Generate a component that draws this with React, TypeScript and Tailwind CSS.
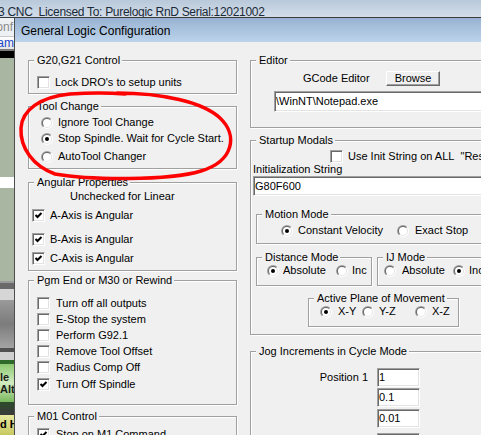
import React from "react";

type P = { className?: string; children?: React.ReactNode };

function Check({ on }: { on?: boolean }) {
  return (
    <span className="block w-[13px] h-[13px] shrink-0 bg-white border border-t-[#a0a0a0] border-l-[#a0a0a0] border-r-white border-b-white shadow-[inset_1px_1px_0_#696969,inset_-1px_-1px_0_#e3e3e3]">
      {on && (
        <svg width="11" height="11" viewBox="0 0 11 11" className="block">
          <path d="M2.5 5 L4.5 7 L8.5 3" fill="none" stroke="#000" strokeWidth="2" />
        </svg>
      )}
    </span>
  );
}

function Radio({ on }: { on?: boolean }) {
  return (
    <svg width="12" height="12" viewBox="0 0 12 12" className="block shrink-0">
      <defs>
        <linearGradient id="rOut" x1="0" y1="0" x2="1" y2="1">
          <stop offset="0.45" stopColor="#a0a0a0" />
          <stop offset="0.55" stopColor="#ffffff" />
        </linearGradient>
        <linearGradient id="rIn" x1="0" y1="0" x2="1" y2="1">
          <stop offset="0.45" stopColor="#696969" />
          <stop offset="0.55" stopColor="#e3e3e3" />
        </linearGradient>
      </defs>
      <circle cx="6" cy="6" r="6" fill="url(#rOut)" />
      <circle cx="6" cy="6" r="5" fill="url(#rIn)" />
      <circle cx="6" cy="6" r="4" fill="#fff" />
      {on && <circle cx="6" cy="6" r="2" fill="#000" />}
    </svg>
  );
}

function Field({ className = "", children }: P) {
  return (
    <div
      className={`flex items-center bg-white pl-[1px] whitespace-nowrap overflow-hidden shrink-0 border border-t-[#a0a0a0] border-l-[#a0a0a0] border-r-white border-b-white shadow-[inset_1px_1px_0_#696969,inset_-1px_-1px_0_#e3e3e3] ${className}`}
    >
      {children}
    </div>
  );
}

function Group({ label, className = "", children }: P & { label: string }) {
  return (
    <div className={`relative shrink-0 border border-[#a0a0a0] shadow-[inset_1px_1px_0_#fff,1px_1px_0_#fff] ${className}`}>
      <span className="absolute -top-[7px] left-[5px] bg-[#f0f0f0] pl-[3px] pr-[2px] leading-[13px] whitespace-nowrap">
        {label}
      </span>
      {children}
    </div>
  );
}

function Row({ className = "", children }: P) {
  return <div className={`flex items-center h-[13px] whitespace-nowrap ${className}`}>{children}</div>;
}

function LeftStrip() {
  return (
    <div className="w-[14px] shrink-0 flex flex-col overflow-hidden text-[12px]">
      <div className="h-[18px] shrink-0 bg-[#eef1f4] flex justify-end pr-[1px] text-[#8a8a8a] leading-[18px] whitespace-nowrap">
        Conf
      </div>
      <div className="h-[1px] shrink-0 bg-[#c8c8c8]" />
      <div className="h-[12px] shrink-0 bg-gradient-to-b from-white to-[#e4e4e4] flex justify-end text-[#1a47c8] leading-[12px] whitespace-nowrap">
        Program
      </div>
      <div className="h-[2px] shrink-0 bg-[#7a7a7a]" />
      <div className="h-[7px] shrink-0 bg-black" />
      <div className="h-[119px] shrink-0 bg-[#a9b6a1]" />
      <div className="h-[11px] shrink-0 bg-white" />
      <div className="h-[93px] shrink-0 bg-[#a9b6a1]" />
      <div className="h-[2px] shrink-0 bg-[#9a9a9a]" />
      <div className="h-[6px] shrink-0 bg-[#6a6a6a]" />
      <div className="h-[11px] shrink-0 bg-[#d6d6d6]" />
      <div className="h-[48px] shrink-0 bg-gradient-to-b from-[#9a9a9a] via-[#7c7c7c] to-[#a4a4a4]" />
      <div className="h-[4px] shrink-0 bg-[#505050]" />
      <div className="h-[8px] shrink-0 bg-[#d0d0d0]" />
      <div className="h-[4px] shrink-0 bg-[#2e6a2a]" />
      <div className="h-[38px] shrink-0 bg-gradient-to-b from-[#8cc870] via-[#d2ecc0] to-[#78b85c] flex flex-col justify-center font-bold text-[11px] leading-[12px] text-[#1a1a1a] whitespace-nowrap">
        <span>le</span>
        <span>Alt</span>
      </div>
      <div className="h-[13px] shrink-0 bg-gradient-to-b from-[#2c4a2a] to-[#3a3a3a]" />
      <div className="h-[20px] shrink-0 bg-gradient-to-b from-[#e8e8a0] to-[#c8c860] font-bold text-[11px] leading-[18px] whitespace-nowrap">
        d H
      </div>
    </div>
  );
}

export default function App() {
  return (
    <div className="relative w-[481px] h-[435px] overflow-hidden bg-[#f0f0f0] font-['Liberation_Sans',Arial,sans-serif] text-[11px] leading-[13px] text-black">
      <div className="h-[18px] border-b border-[#3a3a3a] bg-gradient-to-b from-[#b9c9da] to-[#d2dde8] overflow-hidden">
        <div className="-ml-[2px] pt-[5px] text-[12px] leading-[14px] tracking-[-0.3px] text-[#1b2a3a] whitespace-pre">
          3 CNC  Licensed To: Purelogic RnD Serial:12021002
        </div>
      </div>
      <div className="flex h-[417px]">
        <LeftStrip />
        <div className="w-[1px] shrink-0 bg-[#4d4d4d]" />
        <div className="flex-1 flex flex-col min-w-0">
          <div className="h-[24px] shrink-0 bg-gradient-to-b from-[#98b3d2] to-[#bcd3eb] pl-[6px] pt-[6px] text-[12px] leading-[14px] whitespace-nowrap">
            General Logic Configuration
          </div>
          <div className="flex pt-[18px] pl-[13px] gap-[13px]">
            {/* left column */}
            <div className="w-[209px] shrink-0 flex flex-col">
              <Group label="G20,G21 Control" className="h-[34px]">
                <Row className="mt-[15px] pl-[8px] gap-[5px]">
                  <Check />
                  Lock DRO's to setup units
                </Row>
              </Group>
              <Group label="Tool Change" className="h-[63px] mt-[12px]">
                <Row className="mt-[9px] pl-[12px] gap-[5px]">
                  <Radio />
                  Ignore Tool Change
                </Row>
                <Row className="mt-[3px] pl-[12px] gap-[5px]">
                  <Radio on />
                  Stop Spindle. Wait for Cycle Start.
                </Row>
                <Row className="mt-[5px] pl-[12px] gap-[5px]">
                  <Radio />
                  AutoTool Changer
                </Row>
              </Group>
              <Group label="Angular Properties" className="h-[89px] mt-[13px]">
                <Row className="mt-[7px] pl-[41px]">Unchecked for Linear</Row>
                <Row className="mt-[6px] pl-[3px] gap-[5px]">
                  <Check on />
                  A-Axis is Angular
                </Row>
                <Row className="mt-[11px] pl-[3px] gap-[5px]">
                  <Check on />
                  B-Axis is Angular
                </Row>
                <Row className="mt-[6px] pl-[3px] gap-[5px]">
                  <Check on />
                  C-Axis is Angular
                </Row>
              </Group>
              <Group label="Pgm End or M30 or Rewind" className="h-[125px] mt-[9px]">
                <Row className="mt-[16px] pl-[8px] gap-[6px]">
                  <Check />
                  Turn off all outputs
                </Row>
                <Row className="mt-[3px] pl-[8px] gap-[6px]">
                  <Check />
                  E-Stop the system
                </Row>
                <Row className="mt-[3px] pl-[8px] gap-[6px]">
                  <Check />
                  Perform G92.1
                </Row>
                <Row className="mt-[3px] pl-[8px] gap-[6px]">
                  <Check />
                  Remove Tool Offset
                </Row>
                <Row className="mt-[3px] pl-[8px] gap-[6px]">
                  <Check />
                  Radius Comp Off
                </Row>
                <Row className="mt-[4px] pl-[8px] gap-[6px]">
                  <Check on />
                  Turn Off Spindle
                </Row>
              </Group>
              <Group label="M01 Control" className="h-[40px] mt-[11px]">
                <Row className="mt-[11px] pl-[8px] gap-[6px]">
                  <Check on />
                  Stop on M1 Command
                </Row>
              </Group>
            </div>

            {/* right column */}
            <div className="w-[260px] shrink-0 flex flex-col">
              <Group label="Editor" className="h-[68px]">
                <div className="flex items-center mt-[10px] pl-[52px] h-[15px] whitespace-nowrap">
                  <span className="w-[83px] shrink-0">GCode Editor</span>
                  <div className="w-[54px] h-[15px] shrink-0 flex items-center justify-center border border-t-white border-l-white border-r-[#696969] border-b-[#696969] shadow-[inset_-1px_-1px_0_#a0a0a0] bg-[#f0f0f0]">
                    Browse
                  </div>
                </div>
                <Field className="mt-[5px] ml-[23px] w-[230px] h-[21px]">{"\\WinNT\\Notepad.exe"}</Field>
              </Group>

              <Group label="Startup Modals" className="h-[195px] mt-[12px]">
                <Row className="mt-[9px] pl-[79px] gap-[5px]">
                  <Check />
                  Use Init String on ALL&nbsp;&nbsp;"Resets"
                </Row>
                <Row className="pl-[2px]">Initialization String</Row>
                <Field className="ml-[2px] w-[240px] h-[20px]">G80F600</Field>

                <Group label="Motion Mode" className="ml-[5px] mt-[18px] w-[240px] h-[30px]">
                  <Row className="mt-[9px] pl-[24px]">
                    <Radio on />
                    <span className="ml-[5px] w-[99px]">Constant Velocity</span>
                    <Radio />
                    <span className="ml-[6px]">Exact Stop</span>
                  </Row>
                </Group>

                <div className="flex mt-[13px] ml-[5px] gap-[5px]">
                  <Group label="Distance Mode" className="w-[116px] h-[29px]">
                    <Row className="mt-[6px] pl-[10px]">
                      <Radio on />
                      <span className="ml-[4px] w-[53px]">Absolute</span>
                      <Radio />
                      <span className="ml-[4px]">Inc</span>
                    </Row>
                  </Group>
                  <Group label="IJ Mode" className="w-[130px] h-[29px]">
                    <Row className="mt-[6px] pl-[6px]">
                      <Radio />
                      <span className="ml-[6px] w-[51px]">Absolute</span>
                      <Radio on />
                      <span className="ml-[4px]">Inc</span>
                    </Row>
                  </Group>
                </div>

                <Group label="Active Plane of Movement" className="ml-[57px] mt-[12px] w-[151px] h-[29px]">
                  <Row className="mt-[6px] pl-[11px]">
                    <Radio on />
                    <span className="ml-[6px] w-[24px]">X-Y</span>
                    <Radio />
                    <span className="ml-[5px] w-[36px]">Y-Z</span>
                    <Radio />
                    <span className="ml-[5px]">X-Z</span>
                  </Row>
                </Group>
              </Group>

              <Group label="Jog Increments in Cycle Mode" className="h-[100px] mt-[16px]">
                <div className="flex items-center mt-[16px]">
                  <span className="w-[117px] text-right shrink-0">Position 1</span>
                  <Field className="ml-[9px] w-[43px] h-[19px]">1</Field>
                </div>
                <Field className="ml-[126px] mt-[1px] w-[43px] h-[19px]">0.1</Field>
                <Field className="ml-[126px] mt-[2px] w-[43px] h-[19px]">0.01</Field>
                <Field className="ml-[126px] mt-[5px] w-[43px] h-[19px]">0.001</Field>
              </Group>
            </div>
          </div>
        </div>
      </div>

      <svg
        className="absolute left-0 top-0 pointer-events-none"
        width="481"
        height="435"
        viewBox="0 0 481 435"
      >
        <path
          d="M 117 93 C 162 93, 203 102, 220 118 C 238 135, 234 161, 201 171 C 168 181, 90 180, 55 174 C 33 166, 20 148, 21 128 C 22 110, 40 97, 70 94 C 85 93, 100 92, 125 94"
          fill="none"
          stroke="#ff0000"
          strokeWidth="3.5"
          strokeLinecap="round"
        />
      </svg>
    </div>
  );
}
